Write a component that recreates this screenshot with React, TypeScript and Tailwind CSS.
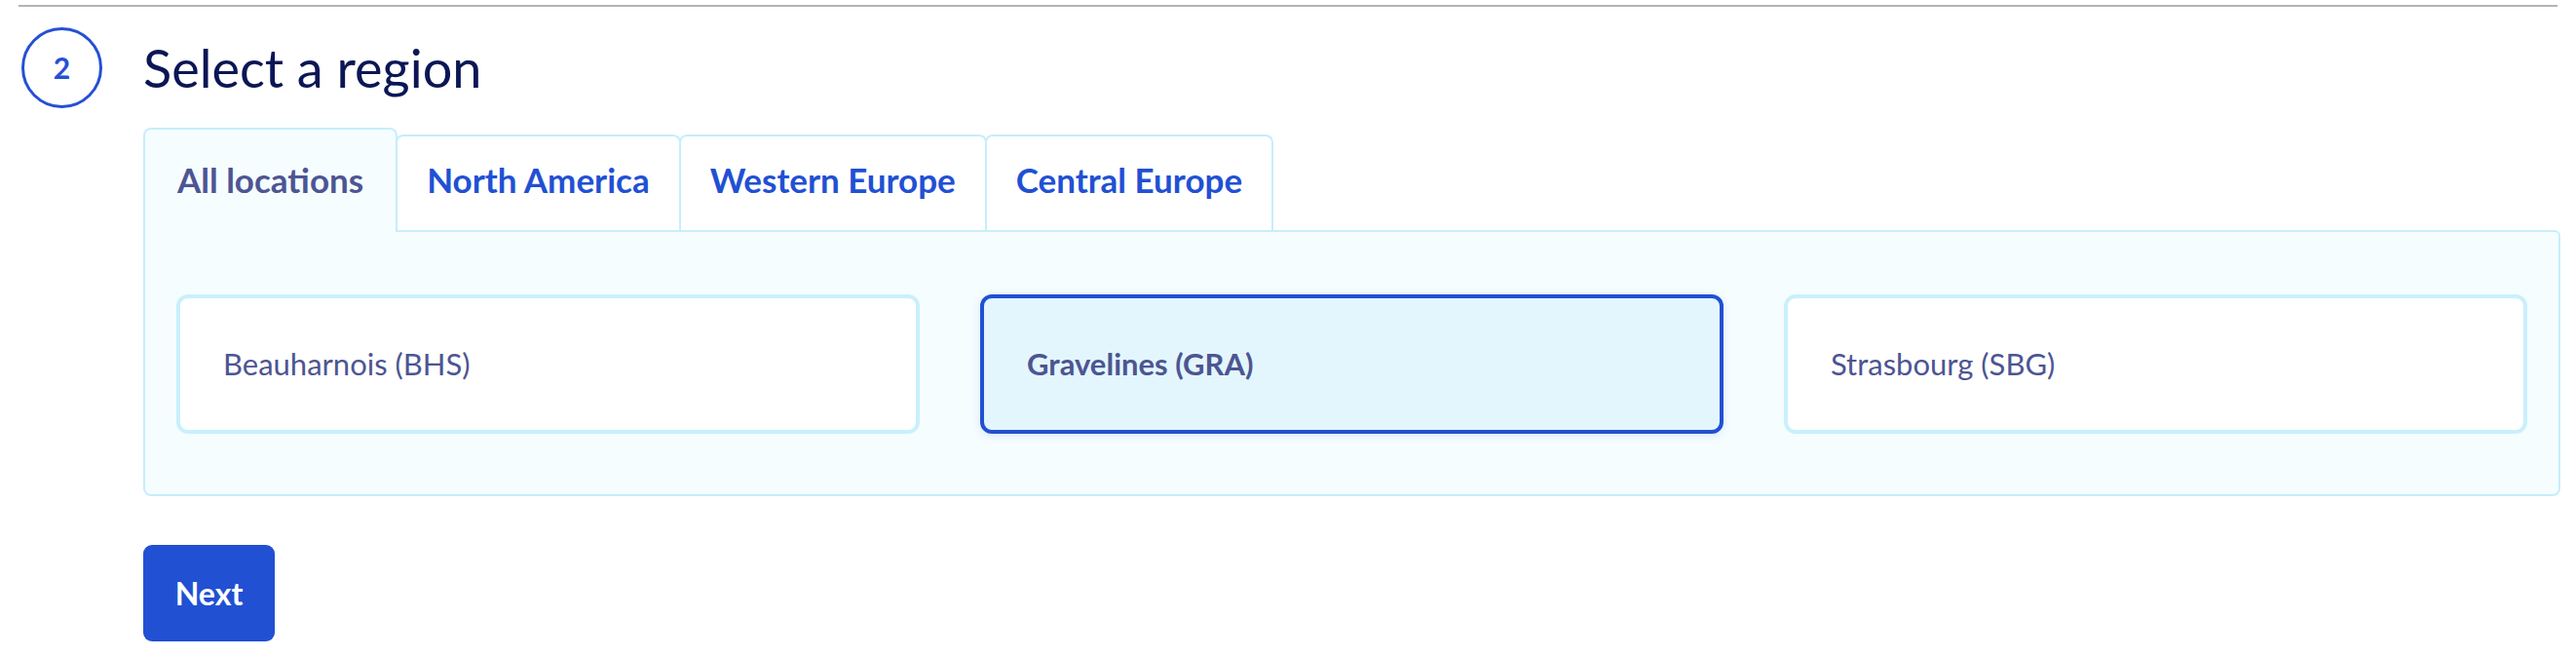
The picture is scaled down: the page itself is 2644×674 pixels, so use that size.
import React, { useState } from "react";

const tabs = ["All locations", "North America", "Western Europe", "Central Europe"];

const regions = [
  { id: "BHS", name: "Beauharnois (BHS)" },
  { id: "GRA", name: "Gravelines (GRA)" },
  { id: "SBG", name: "Strasbourg (SBG)" },
];

const App = () => {
  const [activeTab, setActiveTab] = useState(0);
  const [selected, setSelected] = useState("GRA");

  return (
    <div className="w-[2644px] h-[674px] bg-white font-['Lato','Noto_Sans',sans-serif]">
      <div className="mx-[19px] pt-[5px]">
        <div className="h-[2px] bg-[#b3b3b3]" />
      </div>

      {/* step header */}
      <div className="flex items-center pl-[22px] pt-[21px]">
        <div className="w-[83px] h-[83px] rounded-full border-[3px] border-[#2450d4] flex items-center justify-center text-[30px] font-bold text-[#2450d4]">
          2
        </div>
        <h2 className="ml-[42px] text-[54px] leading-none text-[#0b1655] font-normal">
          Select a region
        </h2>
      </div>

      <div className="pl-[147px] pr-[16px] pt-[20px]">
        {/* tabs */}
        <div className="flex items-end">
          {tabs.map((tab, idx) => {
            const active = idx === activeTab;
            return (
              <button
                key={tab}
                onClick={() => setActiveTab(idx)}
                className={
                  active
                    ? "relative z-10 h-[107px] -mb-[2px] px-[33px] pb-[36px] flex items-end rounded-t-lg border-2 border-b-0 border-[#c6eefb] bg-[#f5fdff] text-[35px] font-bold text-[#4d5592]"
                    : "h-[98px] -ml-[2px] px-[30px] pb-[34px] flex items-end rounded-t-lg border-2 border-b-0 border-[#c6eefb] bg-white text-[35px] font-bold text-[#2150d3]"
                }
              >
                <span className="leading-none">{tab}</span>
              </button>
            );
          })}
        </div>

        {/* panel */}
        <div className="h-[273px] border-2 border-[#c6eefb] rounded-b-lg rounded-tr-md bg-[#f5fdff] px-[32px] pt-[64px]">
          <div className="grid grid-cols-3 gap-[62px]">
            {regions.map((r) => {
              const isSel = r.id === selected;
              return (
                <button
                  key={r.id}
                  onClick={() => setSelected(r.id)}
                  className={
                    isSel
                      ? "h-[143px] rounded-xl border-4 border-[#2150d3] bg-[#e3f6fd] shadow-[0_2px_10px_rgba(33,80,211,0.12)] pl-[44px] text-left text-[31px] font-bold text-[#4d5592]"
                      : "h-[143px] rounded-xl border-4 border-[#c9f0fc] bg-white pl-[44px] text-left text-[31px] text-[#4d5592]"
                  }
                >
                  {r.name}
                </button>
              );
            })}
          </div>
        </div>

        <button className="mt-[50px] w-[135px] h-[99px] rounded-[9px] bg-[#2150d3] text-white text-[32px] font-bold">
          Next
        </button>
      </div>
    </div>
  );
};

export default App;
